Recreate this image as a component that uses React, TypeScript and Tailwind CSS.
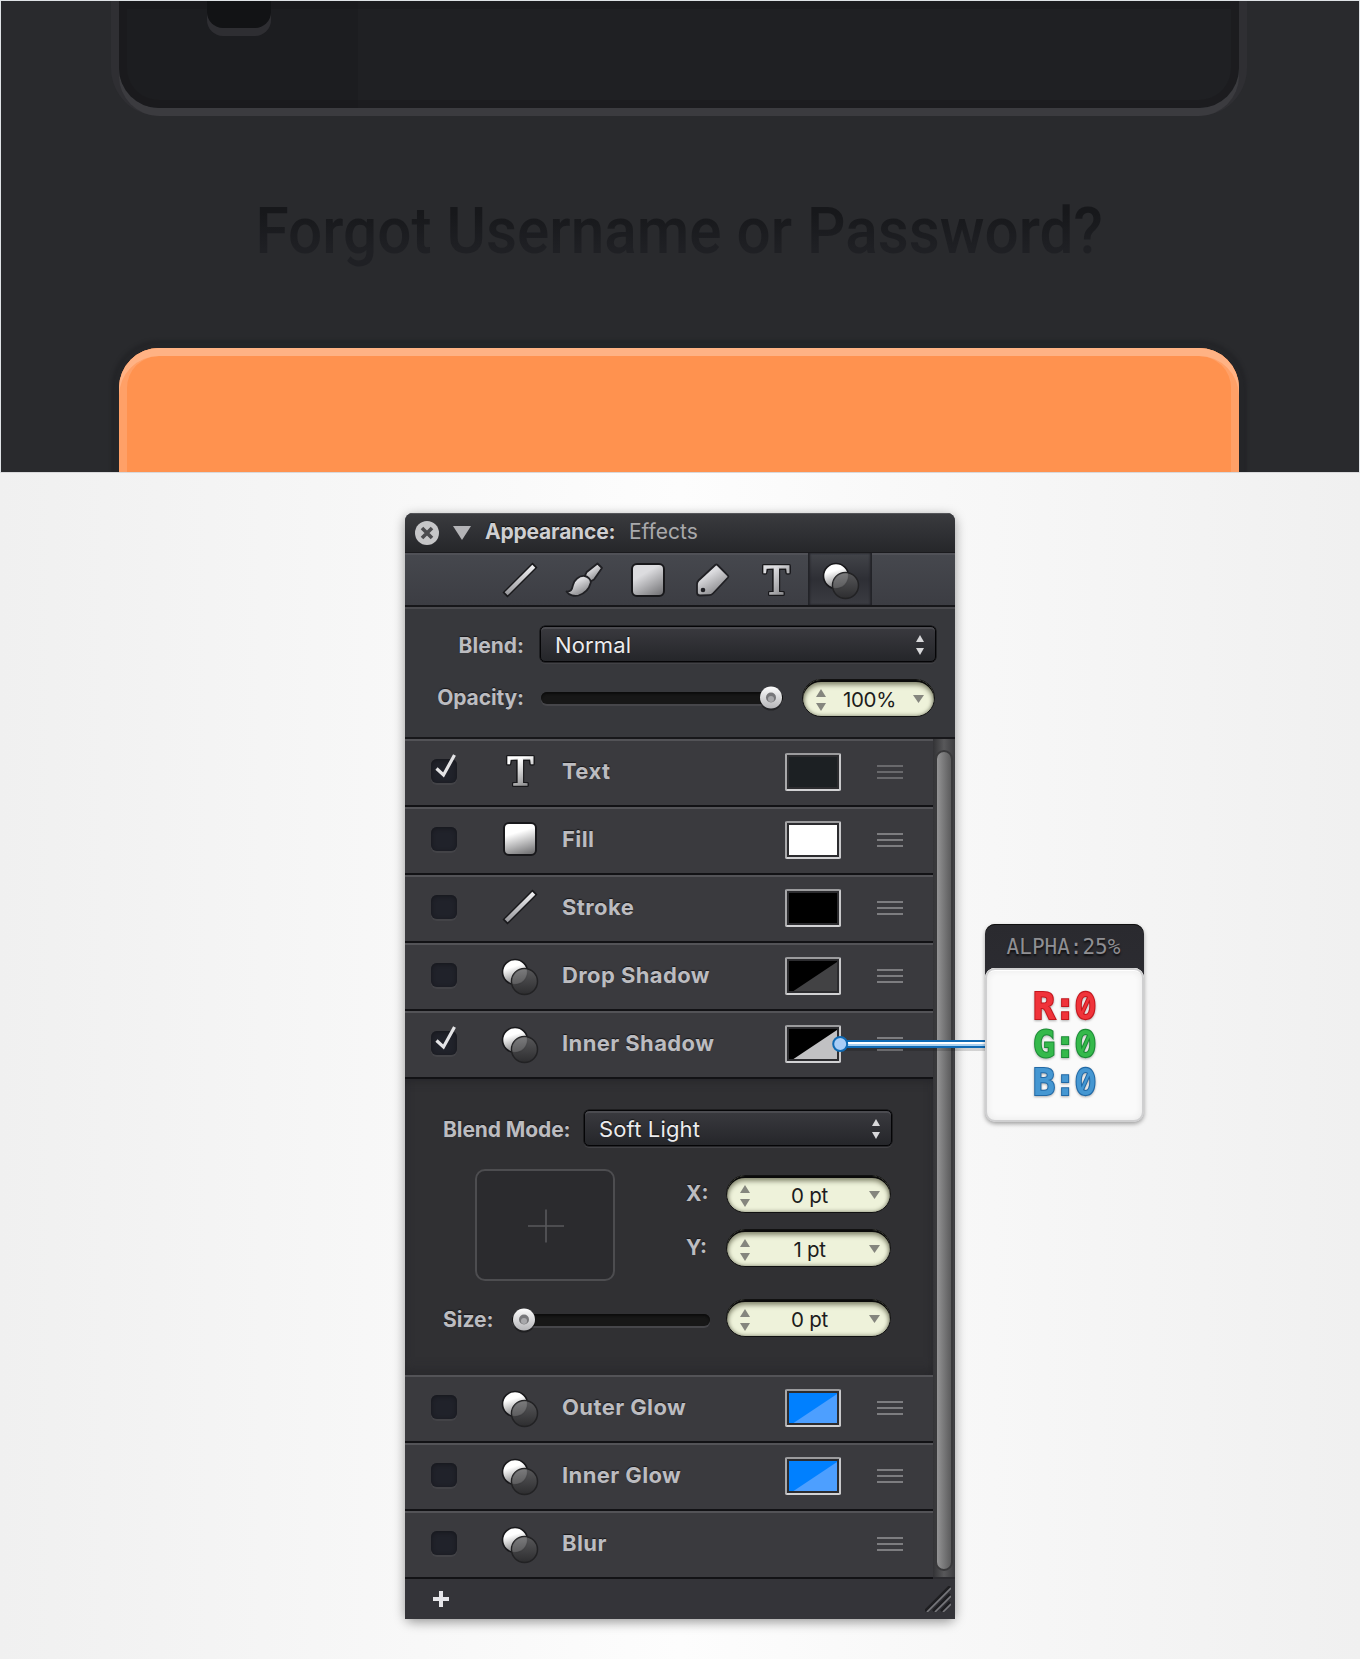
import React from "react";

const FONT = "font-['Inter',sans-serif]";
const LABEL = "whitespace-nowrap font-bold text-[#bcbcc0] [text-shadow:0_-1px_1px_#18181b]";

function Gradients() {
  return (
    <svg width="0" height="0" className="absolute">
      <defs>
        <linearGradient id="bright" x1="0.3" y1="0" x2="0.6" y2="1">
          <stop offset="0.3" stopColor="#fff" />
          <stop offset="1" stopColor="#777779" />
        </linearGradient>
        <linearGradient id="soft" x1="0.2" y1="0" x2="0.8" y2="1">
          <stop offset="0.3" stopColor="#dcdcdf" />
          <stop offset="1" stopColor="#77777a" />
        </linearGradient>
        <linearGradient id="line" gradientUnits="userSpaceOnUse" x1="0" y1="4" x2="0" y2="32">
          <stop offset="0" stopColor="#f0f0f2" />
          <stop offset="1" stopColor="#9a9a9e" />
        </linearGradient>
        <linearGradient id="dark" x1="0" y1="0" x2="0" y2="1">
          <stop offset="0" stopColor="#5c5c5e" />
          <stop offset="1" stopColor="#2c2c2e" />
        </linearGradient>
        <linearGradient id="knob" x1="0" y1="0" x2="0" y2="1">
          <stop offset="0" stopColor="#fdfdfd" />
          <stop offset="1" stopColor="#b5b5b8" />
        </linearGradient>
      </defs>
    </svg>
  );
}

type IconKind = "text" | "fill" | "stroke" | "fx" | "brush" | "tag";

function Icon({ kind, soft }: { kind: IconKind; soft?: boolean }) {
  const fill = soft ? "url(#soft)" : "url(#bright)";
  return (
    <svg width="36" height="36" viewBox="0 0 36 36" className="shrink-0 overflow-visible">
      {kind === "text" && (
        <text
          x="18.500"
          y="31.500"
          textAnchor="middle"
          fontFamily="Liberation Serif, serif"
          fontSize="43"
          fill={fill}
          stroke={fill}
          strokeWidth="1.300"
          className="[filter:drop-shadow(1px_0_0.3px_#18181b)_drop-shadow(-1px_0_0.3px_#18181b)_drop-shadow(0_1px_0.3px_#18181b)_drop-shadow(0_-1px_0.3px_#18181b)]"
        >
          T
        </text>
      )}
      {kind === "fill" && (
        <rect x="2" y="2" width="32" height="32" rx="5" fill={fill} stroke="#18181b" strokeWidth="2" />
      )}
      {kind === "stroke" && (
        <>
          <path d="M3 33L33 3" stroke="#18181b" strokeWidth="7" />
          <path d="M4.2 31.8L31.8 4.200" stroke="url(#line)" strokeWidth="4.200" />
        </>
      )}
      {kind === "brush" && (
        <g stroke="#202024" strokeWidth="1.8" strokeLinejoin="round" fill={fill}>
          <path d="M31.500 1.500L36 6L28 17.500L24.500 19.500L18.800 14L20.500 10.300Z" />
          <path d="M18.500 14C22 14.500 25 17.500 24.800 20.500C23.500 25.500 20.500 31 12.500 33.500C8.500 34.500 3 33.500 0.500 29.500C5 30 6 27.500 7 23C8 18 13 13.500 18.500 14Z" />
        </g>
      )}
      {kind === "tag" && (
        <>
          <path d="M21.500 2.800Q22.500 2 23.500 3L34 13.500Q34.800 14.500 34 15.500L19 31.500Q17.500 33.200 15 33.200L6 33.500Q3 33.500 3 30.500V22.500Q3 20 4.500 18.500Z" fill={fill} stroke="#202024" strokeWidth="1.8" />
          <circle cx="9" cy="28" r="2.300" fill="#202024" />
        </>
      )}
      {kind === "fx" && (
        <>
          <circle cx="13" cy="13" r="12.500" fill="url(#bright)" stroke="#18181b" strokeWidth="1.600" />
          <circle cx="22.500" cy="22.500" r="13" fill="url(#dark)" fillOpacity="0.9" stroke="#222224" strokeWidth="1.500" />
          <path d="M10.300 18.500A12.500 12.500 0 0 1 25 10A12.500 12.500 0 0 1 10.500 25A13 13 0 0 1 10.300 18.500Z" fill="#fff" fillOpacity="0.13" />
        </>
      )}
    </svg>
  );
}

function Arrow({ down, className }: { down?: boolean; className: string }) {
  return (
    <svg viewBox="0 0 10 8" className={className} preserveAspectRatio="none">
      <path d={down ? "M0 0H10L5 8Z" : "M0 8H10L5 0Z"} fill="currentColor" />
    </svg>
  );
}

function SelectBox({ value, className }: { value: string; className: string }) {
  return (
    <div
      className={`flex h-9 items-center justify-between rounded-[5px] border border-[#050507] bg-linear-to-b from-[#3a3a3f] to-[#25262a] pt-px pr-[11px] pl-[14px] shadow-[inset_0_2px_0_#4b4b50,0_0_0_0.5px_#0a0a0c,0_2px_0_#424246] ${className}`}
    >
      <span className="text-[22px] leading-9 font-normal tracking-[0.15px] text-[#ececee] [text-shadow:0_-1px_1px_#111]">
        {value}
      </span>
      <span className="flex flex-col gap-[6px] text-[#d8d8da]">
        <Arrow className="h-[7px] w-2" />
        <Arrow down className="h-[7px] w-2" />
      </span>
    </div>
  );
}

function NumberField({ value, className }: { value: string; className: string }) {
  return (
    <div
      className={`flex h-[38px] items-center justify-between rounded-full border border-[#111] bg-[#eef2da] pt-[3px] pr-[10px] pl-[13px] shadow-[inset_0_2px_0_#0a0a0a,inset_0_5px_5px_#85876f,inset_0_0_4px_#777b66] ${className}`}
    >
      <span className="flex flex-col gap-[6px] text-[#85867e]">
        <Arrow className="h-2 w-[10px]" />
        <Arrow down className="h-2 w-[10px]" />
      </span>
      <span className="text-[20.500px] leading-9 tracking-[-0.3px] text-[#1c1c1c]">{value}</span>
      <span className="text-[#85867e]">
        <Arrow down className="mb-px h-2 w-[11px]" />
      </span>
    </div>
  );
}

function Slider({ atEnd, className }: { atEnd?: boolean; className: string }) {
  return (
    <div
      className={`flex h-3 items-center rounded-full bg-[#171717] shadow-[inset_0_2px_2px_#0c0c0c,0_2px_0_#46464a] ${atEnd ? "justify-end" : "justify-start"} ${className}`}
    >
      <svg width="24" height="26" viewBox="0 0 24 26" className="-my-3 shrink-0">
        <circle cx="12" cy="14" r="11.500" fill="#000" fillOpacity="0.35" />
        <circle cx="12" cy="12.500" r="11" fill="url(#knob)" />
        <circle cx="12" cy="12.500" r="5" fill="#77777a" />
        <circle cx="12" cy="14" r="3" fill="#a8a8ab" />
      </svg>
    </div>
  );
}

function Checkbox({ checked }: { checked?: boolean }) {
  return (
    <div className="h-6 w-[26px] shrink-0 rounded-[6px] bg-[#20222a] shadow-[inset_0_1px_4px_#15161b,0_2px_0_#434347]">
      {checked && (
        <svg width="26" height="24" viewBox="0 0 26 24" className="overflow-visible">
          <path d="M5.500 9.500L12.500 16L23.500 -4" fill="none" stroke="#e4e4e6" strokeWidth="3.200" />
        </svg>
      )}
    </div>
  );
}

type Effect = { label: string; icon: IconKind; checked?: boolean; a?: string; b?: string; dim?: boolean };

function Row({ label, icon, checked, a, b, dim }: Effect) {
  return (
    <div className="flex h-[68px] items-center border-b-2 border-[#121215] bg-[#3a3a3e] pl-[26px] shadow-[inset_0_2px_0_#535357]">
      <div className="pb-[2px]">
        <Checkbox checked={checked} />
      </div>
      <div className={`ml-[45px] ${icon === "fx" ? "pt-[2px]" : "pb-[2px]"}`}>
        <Icon kind={icon} />
      </div>
      <div className={`ml-6 w-[223px] pb-[2px] text-[22px] leading-[30px] tracking-[0.4px] ${LABEL}`}>{label}</div>
      <div className="w-[58px]">
        {a && (
          <div className="h-[38px] w-14 rounded-[2px] border-2 border-t-[#9b9b9d] border-r-[#c8c8ca] border-b-[#d2d2d4] border-l-[#a8a8aa] bg-[#2c2c2f] p-[2px]">
            <svg width="48" height="30" className="block">
              <rect width="48" height="30" fill={a} />
              {b && <path d="M4.500 30L48 1V30Z" fill={b} />}
            </svg>
          </div>
        )}
      </div>
      <div className={`ml-[34px] flex w-[26px] flex-col gap-1 ${dim ? "opacity-70" : ""}`}>
        <div className="h-[2px] bg-[#7d7d80]" />
        <div className="h-[2px] bg-[#7d7d80]" />
        <div className="h-[2px] bg-[#7d7d80]" />
      </div>
    </div>
  );
}

const upper: Effect[] = [
  { label: "Text", icon: "text", checked: true, a: "#1c2023", dim: true },
  { label: "Fill", icon: "fill", a: "#ffffff" },
  { label: "Stroke", icon: "stroke", a: "#000000" },
  { label: "Drop Shadow", icon: "fx", a: "#000000", b: "#424244" },
  { label: "Inner Shadow", icon: "fx", checked: true, a: "#000000", b: "#c1c1c3" },
];
const lower: Effect[] = [
  { label: "Outer Glow", icon: "fx", a: "#0080ff", b: "#4d9fff" },
  { label: "Inner Glow", icon: "fx", a: "#0080ff", b: "#4d9fff" },
  { label: "Blur", icon: "fx" },
];

function LoginPreview() {
  return (
    <div className="h-[473px] border border-[#dfe3e6] border-b-[#d8d8da] bg-[#292a2d]">
      <div className="flex h-full w-[1356px] flex-col overflow-hidden px-[118px]">
        <div className="flex h-[107px] shrink-0 rounded-b-[40px] bg-[#1f2023] shadow-[inset_0_0_0_8px_rgba(24,24,27,0.35),0_8px_0_#3b3b3f,0_0_0_8px_#2f2f33]">
          <div className="h-full w-[239px] rounded-bl-[40px] bg-[#18191c]/40 pl-[88px]">
            <div className="h-[27px] w-16 rounded-b-[16px] bg-[#121315] shadow-[0_8px_0_#2e2e32]" />
          </div>
        </div>
        <div className="mt-[81px] flex h-20 justify-center">
          <span className="shrink-0 scale-x-[0.935] bg-linear-to-b from-[#17181b] from-30% to-[#1f2024] to-75% bg-clip-text font-['Roboto',sans-serif] text-[64.500px] leading-[84px] font-medium whitespace-nowrap text-transparent">
            Forgot Username or Password?
          </span>
        </div>
        <div className="mt-[79px] h-[200px] shrink-0 rounded-[40px] bg-[#ff924f] shadow-[inset_0_8px_0_#ffb284,inset_0_0_0_8px_#ffa067,0_0_3px_8px_#242528]" />
      </div>
    </div>
  );
}

function EffectsPanel() {
  return (
    <div className="w-[550px] overflow-hidden rounded-t-[8px] bg-[#38383c]">
      <div className="flex h-10 items-center border-b border-[#1b1b1e] bg-linear-to-b from-[#3a3b3f] to-[#26272a] pl-[10px] text-[21px] leading-10 shadow-[inset_0_1px_0_#55565a]">
        <svg width="24" height="24" viewBox="0 0 24 24">
          <circle cx="12" cy="12" r="12" fill="#c6c6c8" />
          <path d="M7 7L17 17M17 7L7 17" stroke="#4c4c4f" strokeWidth="3.600" />
        </svg>
        <Arrow down className="ml-[14px] h-[14px] w-[18px] text-[#b4b4b7]" />
        <span className="ml-[14px] w-[144px] pb-px font-bold tracking-[-0.2px] whitespace-nowrap text-[#cfcfd1] [text-shadow:0_-1px_1px_#111]">Appearance:</span>
        <span className="pb-px text-[#a9a9ac]">Effects</span>
      </div>
      <div className="flex h-[54px] border-b-2 border-[#17171a] bg-linear-to-b from-[#46484e] to-[#3c3d43] pl-[83px] shadow-[inset_0_2px_0_#505157]">
        {(["stroke", "brush", "fill", "tag", "text"] as IconKind[]).map((k) => (
          <div key={k} className="flex w-16 items-center justify-center pt-[2px]">
            <Icon kind={k} soft />
          </div>
        ))}
        <div className="flex w-16 items-center justify-center bg-linear-to-b from-[#43454a] via-[#2e2f35] to-[#3b3c42] pt-[3px] pl-[2px] shadow-[inset_2px_0_2px_#222328,inset_-2px_0_2px_#222328]">
          <Icon kind="fx" soft />
        </div>
      </div>
      <div className="h-[132px] border-b-2 border-[#17171a] bg-[#37383c] pt-[19px] shadow-[inset_0_2px_0_#4a4a4e]">
        <div className="flex items-center">
          <div className={`w-[119px] pt-[3px] text-right text-[21px] leading-8 ${LABEL}`}>Blend:</div>
          <SelectBox value="Normal" className="ml-4 w-[396px]" />
        </div>
        <div className="mt-[17px] flex items-center">
          <div className={`w-[119px] text-right text-[21px] leading-9 tracking-[-0.1px] ${LABEL}`}>Opacity:</div>
          <Slider atEnd className="ml-[17px] w-[242px]" />
          <NumberField value="100%" className="ml-[19px] w-[133px]" />
        </div>
      </div>
      <div className="flex">
        <div className="w-[528px]">
          {upper.map((e) => (
            <Row key={e.label} {...e} />
          ))}
          <div className="h-[296px] bg-[#303033] pt-[31px] shadow-[inset_0_8px_10px_-6px_#26262a,inset_0_-8px_12px_-4px_#28282c]">
            <div className="flex items-center">
              <div className={`ml-[38px] w-[141px] pt-[3px] text-[21px] leading-8 tracking-[-0.1px] ${LABEL}`}>Blend Mode:</div>
              <SelectBox value="Soft Light" className="w-[308px]" />
            </div>
            <div className="mt-[23px] flex">
              <div className="ml-[70px] flex h-28 w-[140px] items-center justify-center rounded-[10px] border-2 border-[#4d4d50] bg-[#2b2b2e] pt-[2px] pl-px">
                <svg width="36" height="36" viewBox="0 0 36 36">
                  <path d="M0 18H36M18 1.500V34.500" stroke="#59595c" strokeWidth="1.600" />
                </svg>
              </div>
              <div className="mt-[6px] ml-[71px] flex flex-col gap-4">
                <div className="flex items-center">
                  <div className={`w-[40px] text-[21px] leading-8 ${LABEL}`}>X:</div>
                  <NumberField value="0 pt" className="w-[165px]" />
                </div>
                <div className="flex items-center">
                  <div className={`w-[40px] text-[21px] leading-8 ${LABEL}`}>Y:</div>
                  <NumberField value="1 pt" className="w-[165px]" />
                </div>
              </div>
            </div>
            <div className="mt-[18px] flex items-center">
              <div className={`ml-[38px] w-[69px] pt-[3px] text-[21px] leading-8 ${LABEL}`}>Size:</div>
              <div className="pt-[3px]">
                <Slider className="w-[198px]" />
              </div>
              <NumberField value="0 pt" className="ml-4 w-[165px]" />
            </div>
          </div>
          {lower.map((e) => (
            <Row key={e.label} {...e} />
          ))}
        </div>
        <div className="h-[838px] w-[22px] bg-linear-to-r from-[#333336] via-[#58585a] to-[#3c3c3f] pt-[11px] pl-[2px]">
          <div className="h-[821px] w-[18px] rounded-full border-2 border-[#39393b] bg-linear-to-r from-[#949495] to-[#5c5c5d]" />
        </div>
      </div>
      <div className="-mt-[2px] flex h-[42px] items-center justify-between border-t-2 border-[#2b2b2f] bg-[#343439] pr-1 pl-[28px]">
        <svg width="16" height="16" viewBox="0 0 16 16">
          <path d="M0 8H16M8 0V16" stroke="#e6e6ea" strokeWidth="4" />
        </svg>
        <svg width="26" height="26" viewBox="0 0 26 26">
          <path d="M0 25L25 0M8 25L25 8M16 25L25 16" stroke="#1e1e21" strokeWidth="2.500" />
          <path d="M2 26L26 2M10 26L26 10M18 26L26 18" stroke="#77777b" strokeWidth="1.600" />
        </svg>
      </div>
    </div>
  );
}

function Channel({ name, className }: { name: string; className: string }) {
  return (
    <div className={`flex h-[38px] items-center justify-center leading-[38px] drop-shadow-[0_1px_1px_rgba(0,0,0,0.3)] [paint-order:stroke_fill] ${className}`}>
      <span className="tracking-[-1.300px]">{name}:</span>
      <span className="scale-y-[1.13] font-['Inter',sans-serif] text-[32px] font-semibold [font-feature-settings:'zero']">0</span>
    </div>
  );
}

function AlphaCallout() {
  return (
    <div className="absolute top-[924px] left-[832px] flex items-start">
      <svg width="153" height="20" viewBox="0 0 153 20" className="mt-[110px]">
        <rect x="8" y="14" width="145" height="3" fill="#000" fillOpacity="0.15" />
        <rect x="8" y="6" width="145" height="8" fill="#0f6ab4" />
        <rect x="8" y="8" width="145" height="2" fill="#fff" />
        <rect x="8" y="10" width="145" height="2" fill="#a9d0f0" />
        <circle cx="8.200" cy="10" r="7" fill="#a9cdf6" stroke="#0f6ab4" strokeWidth="2" />
      </svg>
      <div className="h-[198px] w-[159px] rounded-[10px] bg-linear-to-b from-[#2a2a2f] to-[#303036] font-['DejaVu_Sans_Mono',monospace] shadow-[0_2px_4px_rgba(0,0,0,0.35)]">
        <div className="h-11 rounded-t-[10px] pr-[2px] text-center text-[21px] leading-[47px] text-[#8f8f93] shadow-[inset_0_1px_0_#111] [text-shadow:0_2px_2px_#0e0e10]">ALPHA:25%</div>
        <div className="h-[154px] rounded-[10px] bg-[#fafafa] pt-[20px] text-[37px] font-bold shadow-[inset_0_0_0_2px_#cfcfd0,inset_0_3px_0_#fff,inset_0_0_8px_#ddd]">
          <Channel name="R" className="text-[#f0333a] [-webkit-text-stroke:2px_#c4161d]" />
          <Channel name="G" className="text-[#35b94b] [-webkit-text-stroke:2px_#1b8c36]" />
          <Channel name="B" className="text-[#4597d2] [-webkit-text-stroke:2px_#2169a6]" />
        </div>
      </div>
    </div>
  );
}

export default function App() {
  return (
    <div className={`relative h-[1659px] w-[1360px] overflow-hidden bg-linear-to-r from-[#f0f0f0] via-[#fdfdfd] to-[#f0f0f0] ${FONT}`}>
      <Gradients />
      <LoginPreview />
      <div className="mt-[40px] ml-[405px] w-[550px] rounded-[8px] shadow-[0_3px_12px_rgba(0,0,0,0.4)]">
        <EffectsPanel />
      </div>
      <AlphaCallout />
    </div>
  );
}
